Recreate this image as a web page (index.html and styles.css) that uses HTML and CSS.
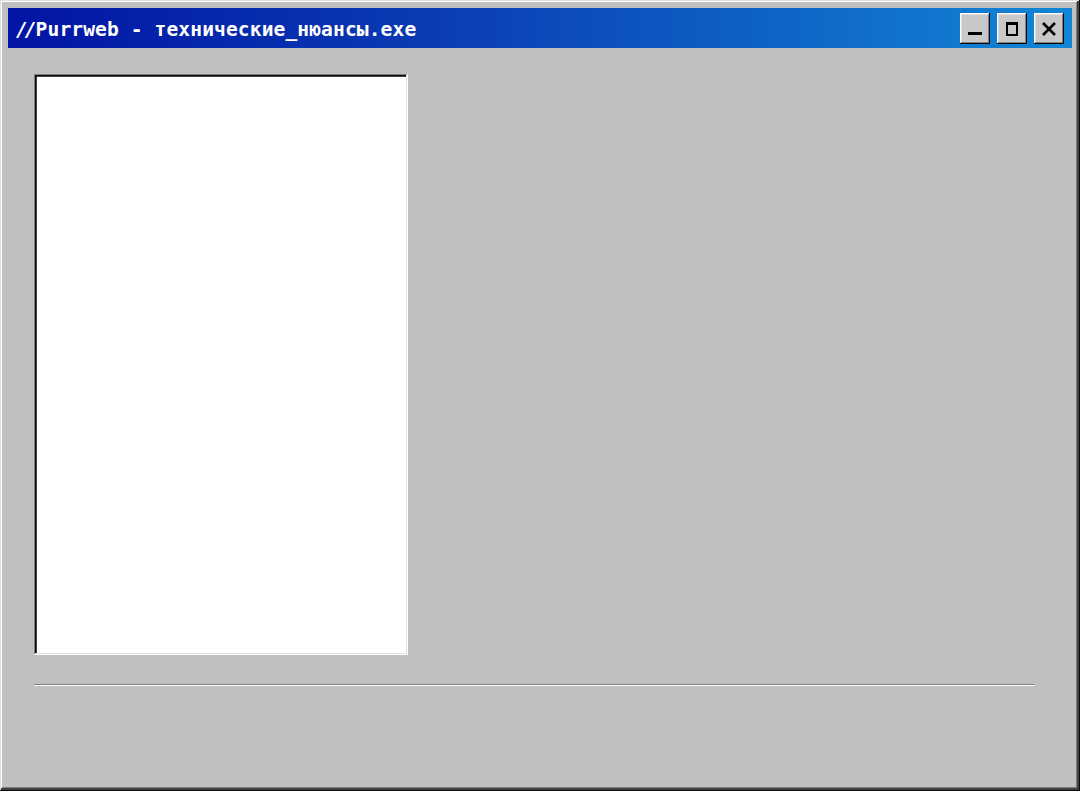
FILE: index.html
```html
<!DOCTYPE html>
<html lang="ru">
<head>
<meta charset="utf-8">
<title>Purrweb</title>
<link rel="stylesheet" href="styles.css">
</head>
<body>
<div class="window">
  <div class="titlebar">
    <div class="title"><span class="slashes">//</span><span class="name">Purrweb - технические_нюансы.exe</span></div>
    <div class="controls">
      <button class="btn" aria-label="Minimize">
        <svg width="16" height="16" viewBox="0 0 16 16"><rect x="1" y="11" width="14" height="3" fill="#000"/></svg>
      </button>
      <button class="btn" aria-label="Maximize">
        <svg width="16" height="16" viewBox="0 0 16 16"><path d="M2 1h12v14H2z M4 4v9h8V4z" fill="#000" fill-rule="evenodd"/></svg>
      </button>
      <button class="btn btn-close" aria-label="Close">
        <svg width="16" height="16" viewBox="0 0 16 16"><path d="M2 2 L14 14 M14 2 L2 14" stroke="#000" stroke-width="2.6"/></svg>
      </button>
    </div>
  </div>
  <div class="content">
    <div class="field"></div>
    <div class="separator"></div>
  </div>
</div>
</body>
</html>
```
FILE: styles.css
```css
html, body {
  margin: 0;
  padding: 0;
  background: #c0c0c0;
}
.window {
  width: 1080px;
  height: 791px;
  box-sizing: border-box;
  padding: 8px;
  background: #c0c0c0;
  box-shadow: inset -1px -1px #0a0a0a, inset 1px 1px #dfdfdf,
              inset -3px -3px #404040, inset 2px 2px #ffffff,
              inset -4px -4px #808080;
  display: flex;
  flex-direction: column;
}
.titlebar {
  height: 40px;
  background: linear-gradient(90deg, #0214a4 0%, #0a3cb4 40%, #1286d4 100%);
  display: flex;
  align-items: center;
  justify-content: space-between;
  padding: 0 8px 0 8px;
  flex-shrink: 0;
}
.title {
  color: #fff;
  font-family: "DejaVu Sans Mono", "Liberation Mono", monospace;
  font-weight: bold;
  font-size: 19.6px;
  display: flex;
  align-items: baseline;
  padding-top: 2px;
}
.slashes {
  font-style: italic;
  letter-spacing: -3px;
  margin-right: 2px;
}
.name {
  letter-spacing: 0.1px;
}
.controls {
  display: flex;
  gap: 7px;
  align-items: center;
  padding-top: 1px;
}
.btn {
  width: 30px;
  height: 31px;
  padding: 0;
  border: 0;
  background: #c8c8c8;
  box-shadow: inset -1px -1px #0a0a0a, inset 1px 1px #ffffff,
              inset -2px -2px #808080, inset 2px 2px #dfdfdf;
  display: flex;
  align-items: center;
  justify-content: center;
}
.btn svg {
  display: block;
}
.content {
  flex: 1;
  padding: 26px 0 0 26px;
  display: flex;
  flex-direction: column;
}
.field {
  width: 374px;
  height: 581px;
  box-sizing: border-box;
  background: #fff;
  box-shadow: inset -1px -1px #ffffff, inset 1px 1px #808080,
              inset -2px -2px #dfdfdf, inset 2px 2px #0a0a0a,
              inset 3px 3px #404040;
}
.separator {
  width: 1000px;
  height: 1px;
  margin-top: 29px;
  background: #808080;
  border-bottom: 1px solid #ffffff;
}
```
